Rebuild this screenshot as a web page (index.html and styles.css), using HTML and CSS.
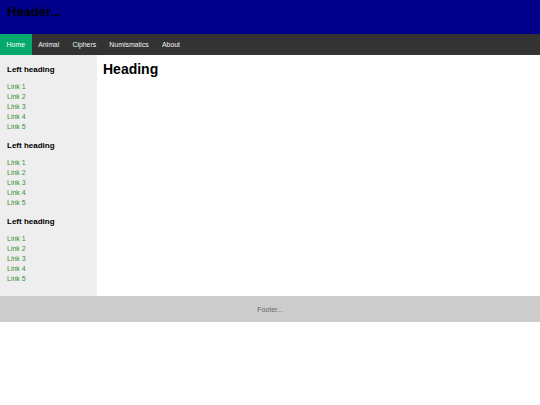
FILE: index.html
```html
<!DOCTYPE html>
<html>
<head>
<meta charset="utf-8">
<link rel="stylesheet" href="styles.css">
</head>
<body>
<header class="header"><h1 class="logo">Header...</h1></header>
<nav class="nav">
  <a class="nav-item active" href="#">Home</a>
  <a class="nav-item" href="#">Animal</a>
  <a class="nav-item" href="#">Ciphers</a>
  <a class="nav-item" href="#">Numismatics</a>
  <a class="nav-item" href="#">About</a>
</nav>
<div class="layout">
  <aside class="side">
    <section class="group">
      <h3 class="side-title">Left heading</h3>
      <ul class="links">
        <li><a href="#">Link 1</a></li>
        <li><a href="#">Link 2</a></li>
        <li><a href="#">Link 3</a></li>
        <li><a href="#">Link 4</a></li>
        <li><a href="#">Link 5</a></li>
      </ul>
    </section>
    <section class="group">
      <h3 class="side-title">Left heading</h3>
      <ul class="links">
        <li><a href="#">Link 1</a></li>
        <li><a href="#">Link 2</a></li>
        <li><a href="#">Link 3</a></li>
        <li><a href="#">Link 4</a></li>
        <li><a href="#">Link 5</a></li>
      </ul>
    </section>
    <section class="group">
      <h3 class="side-title">Left heading</h3>
      <ul class="links">
        <li><a href="#">Link 1</a></li>
        <li><a href="#">Link 2</a></li>
        <li><a href="#">Link 3</a></li>
        <li><a href="#">Link 4</a></li>
        <li><a href="#">Link 5</a></li>
      </ul>
    </section>
  </aside>
  <main class="main">
    <h2 class="main-title">Heading</h2>
  </main>
</div>
<footer class="footer">Footer...</footer>
</body>
</html>
```
FILE: styles.css
```css
* { box-sizing: border-box; }
body {
  margin: 0;
  font-family: "Liberation Sans", Arial, sans-serif;
  background: #fff;
  color: #000;
}
.header {
  height: 34px;
  background: #00008b;
  padding: 4px 7px 0;
}
.logo {
  margin: 0;
  font-size: 13px;
  line-height: 15px;
  font-weight: bold;
  color: #000;
}
.nav {
  display: flex;
  height: 21px;
  background: #333;
}
.nav-item {
  display: flex;
  align-items: center;
  padding: 0 6.6px;
  font-size: 6.9px;
  color: #f2f2f2;
  text-decoration: none;
}
.nav-item.active {
  background: #04aa6d;
  color: #fff;
}
.layout {
  display: flex;
}
.side {
  width: 97px;
  flex: none;
  background: #eee;
  padding: 10px 7px 12px;
  display: flex;
  flex-direction: column;
  gap: 9px;
}
.side-title {
  margin: 0 0 7px;
  font-size: 8px;
  line-height: 10px;
  font-weight: bold;
  color: #000;
}
.links {
  list-style: none;
  margin: 0;
  padding: 0;
}
.links li {
  font-size: 7px;
  line-height: 10px;
}
.links a {
  color: #3a8f3a;
  text-decoration: none;
}
.main {
  flex: 1;
  padding: 6px 6px;
}
.main-title {
  margin: 0;
  font-size: 14px;
  line-height: 16px;
  font-weight: bold;
}
.footer {
  height: 26px;
  background: #ccc;
  color: #666;
  font-size: 7px;
  display: flex;
  align-items: center;
  justify-content: center;
}
```
